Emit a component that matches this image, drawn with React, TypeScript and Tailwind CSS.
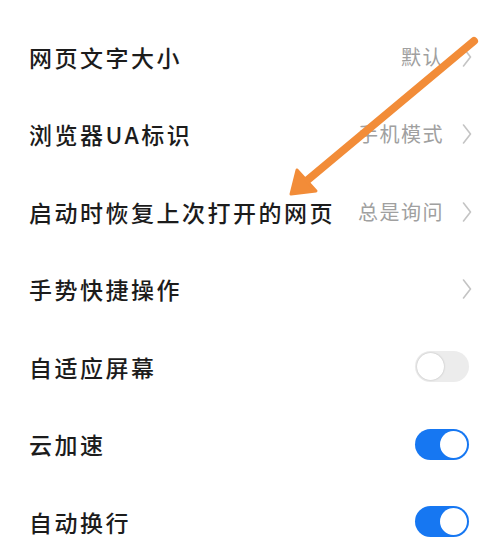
import React from 'react'

const font = { fontFamily: '"Noto Sans CJK SC", "Noto Sans", sans-serif' }

function Chevron() {
  return (
    <svg width="10" height="22" viewBox="0 0 10 22" className="ml-[18px] shrink-0">
      <path d="M1.5 2 L8.5 11 L1.5 20" fill="none" stroke="#c4c4c4" strokeWidth="1.6" strokeLinecap="round" strokeLinejoin="round" />
    </svg>
  )
}

function Toggle({ on }: { on: boolean }) {
  return on ? (
    <div className="w-[54px] h-[31px] mr-[3px] rounded-full bg-[#1677f2] flex items-center justify-end pr-[2px]">
      <div className="w-[27px] h-[27px] rounded-full bg-white" />
    </div>
  ) : (
    <div className="w-[54px] h-[31px] mr-[3px] rounded-full bg-[#ececec] flex items-center pl-[2px]">
      <div className="w-[27px] h-[27px] rounded-full bg-white shadow-[0_0_2px_rgba(0,0,0,0.25)]" />
    </div>
  )
}

type Row = { label: string; value?: string; arrow?: boolean; toggle?: boolean }

const rows: Row[] = [
  { label: '网页文字大小', value: '默认', arrow: true },
  { label: '浏览器UA标识', value: '手机模式', arrow: true },
  { label: '启动时恢复上次打开的网页', value: '总是询问', arrow: true },
  { label: '手势快捷操作', arrow: true },
  { label: '自适应屏幕', toggle: false },
  { label: '云加速', toggle: true },
  { label: '自动换行', toggle: true },
]

export default function App() {
  return (
    <div className="relative w-[497px] h-[549px] bg-white overflow-hidden" style={font}>
      <div className="flex flex-col pt-[18px]">
        {rows.map((r) => (
          <div key={r.label} className="h-[77.5px] flex items-center pl-[29px] pr-[25px]">
            <span className="text-[23px] tracking-[2.5px] font-medium text-[#1c1c1c] flex-1 whitespace-nowrap">{r.label}</span>
            {r.value && (
              <span className="text-[20px] tracking-[1.5px] text-[#a0a0a0] whitespace-nowrap">{r.value}</span>
            )}
            {r.arrow && <Chevron />}
            {r.toggle !== undefined && <Toggle on={r.toggle} />}
          </div>
        ))}
      </div>
      <svg className="absolute inset-0 pointer-events-none" width="497" height="549" viewBox="0 0 497 549">
        <line x1="474" y1="41" x2="304" y2="183" stroke="#f28c38" strokeWidth="8" strokeLinecap="round" />
        <polygon points="291,194 297,170 316,191" fill="#f28c38" stroke="#f28c38" strokeWidth="3" strokeLinejoin="round" />
      </svg>
    </div>
  )
}
